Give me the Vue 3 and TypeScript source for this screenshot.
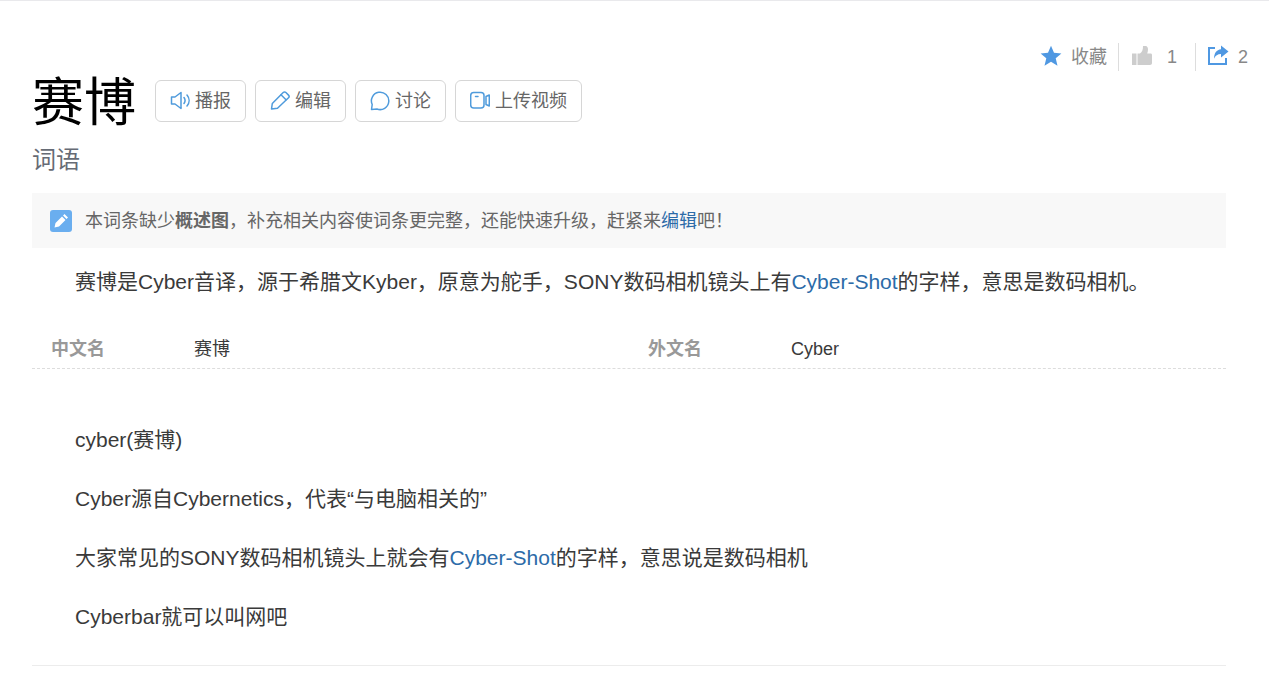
<script setup lang="ts">
interface InfoItem {
  name: string
  value: string
}

const info: InfoItem[] = [
  { name: '中文名', value: '赛博' },
  { name: '外文名', value: 'Cyber' },
]
</script>

<template>
  <div class="page" lang="zh-CN">
    <div class="tools">
      <button class="tool" type="button">
        <svg class="star" viewBox="0 0 22 22" aria-hidden="true">
          <path d="M11 0.8l3 7 7.4.6-5.7 4.9 1.8 7.5L11 16.8l-6.5 4 1.8-7.5L.6 8.4 8 7.8z" fill="#4f98e2" />
        </svg>
        <span>收藏</span>
      </button>
      <button class="tool like" type="button" aria-label="点赞">
        <svg class="thumb" viewBox="0 0 22 22" aria-hidden="true">
          <path d="M1 8.500h4.500V20H1zM6.500 8.500h2.500C11 7 12 5 12 1h2.500C16.500 1 17 3 17 4.500c0 1.500-.3 2.800-.8 4H19.500c1 0 1.500.6 1.500 1.500V18c0 1.300-.8 2-2 2H6.500z" fill="#cdcdcd" />
        </svg>
        <span>1</span>
      </button>
      <button class="tool share" type="button" aria-label="分享">
        <svg class="arrow" viewBox="0 0 22 22" aria-hidden="true">
          <path d="M8 3H2v16h17v-6" fill="none" stroke="#4f98e2" stroke-width="2" />
          <path d="M14 0.500l7.500 6L14 12.500V9c-3.500 0-5.500 1.500-7 4.700C7.200 8 9.500 4.700 14 4.200z" fill="#4f98e2" />
        </svg>
        <span>2</span>
      </button>
    </div>

    <main class="content">
      <header class="heading">
        <h1>赛博</h1>
        <div class="actions">
          <button class="action" type="button">
            <svg viewBox="0 0 20 20" aria-hidden="true">
              <path d="M1.500 6H5L11 1.500v16L5 13H1.500z" />
              <path d="M14 6.500c1.300 1.800 1.300 4.200 0 6M17 4c2.800 3.300 2.800 7.700 0 11" />
            </svg>
            <span>播报</span>
          </button>
          <button class="action" type="button">
            <svg viewBox="0 0 20 20" aria-hidden="true">
              <path d="M1.500 18l.8-5.500L13.200 1.500c.8-.8 1.900-.8 2.700 0L18.500 4.100c.8.800.8 1.900 0 2.700L7.500 17.200z" />
              <path d="M11 3.800l5 5" />
            </svg>
            <span>编辑</span>
          </button>
          <button class="action" type="button">
            <svg viewBox="0 0 20 20" aria-hidden="true">
              <path d="M1.500 18.500l.7-5A8.700 8.700 0 1 1 7 18z" />
            </svg>
            <span>讨论</span>
          </button>
          <button class="action" type="button">
            <svg viewBox="0 0 20 20" aria-hidden="true">
              <rect x="0.700" y="1.500" width="13.300" height="15.500" rx="3" />
              <path d="M5.500 5.500h2.500M16 5.500l3.300-1.500v11L16 13.500z" />
            </svg>
            <span>上传视频</span>
          </button>
        </div>
      </header>
      <p class="subtitle">词语</p>

      <div class="notice">
        <svg viewBox="0 0 22 22" aria-hidden="true">
          <rect width="22" height="22" rx="3" fill="#6aaeef" />
          <path d="M4.500 17.500l1-4.500 6.500-6.500 3.500 3.500L9 16.500zM13 5.500L14.500 4 18 7.500 16.500 9z" fill="#fff" />
        </svg>
        <p>本词条缺少<b>概述图</b>，补充相关内容使词条更完整，还能快速升级，赶紧来<a href="#edit">编辑</a>吧！</p>
      </div>

      <p class="para">赛博是Cyber音译，源于希腊文Kyber，原意为舵手，SONY数码相机镜头上有<a href="#cyber-shot">Cyber-Shot</a>的字样，意思是数码相机。</p>

      <dl class="info">
        <div v-for="item in info" :key="item.name" class="info-item">
          <dt>{{ item.name }}</dt>
          <dd>{{ item.value }}</dd>
        </div>
      </dl>

      <section class="body">
        <p class="para">cyber(赛博)</p>
        <p class="para">Cyber源自Cybernetics，代表“与电脑相关的”</p>
        <p class="para">大家常见的SONY数码相机镜头上就会有<a href="#cyber-shot">Cyber-Shot</a>的字样，意思说是数码相机</p>
        <p class="para">Cyberbar就可以叫网吧</p>
      </section>
    </main>
  </div>
</template>

<style>
body {
  margin: 0;
  background: #fff;
}
</style>

<style scoped>
.page {
  border-top: 1px solid #e9e9ec;
  font-family: "Liberation Sans", "Noto Sans CJK SC", sans-serif;
  font-size: 18px;
  line-height: 28px;
  color: #3a3a3a;
}

h1,
p,
dl,
dd {
  margin: 0;
}

a {
  color: #2c6ba8;
  text-decoration: none;
}

button {
  font: inherit;
  cursor: pointer;
}

.tools {
  display: flex;
  justify-content: flex-end;
  padding: 42px 21px 0 0;
}

.tool {
  display: flex;
  align-items: center;
  height: 28px;
  padding: 0;
  border: 0;
  background: none;
  color: #888;
}

.tool svg {
  width: 22px;
  height: 22px;
  padding-bottom: 2px;
}

.star {
  margin-right: 9px;
}

.like {
  margin-left: 11px;
  padding: 0 18px 0 12px;
  border-left: 1px solid #ddd;
}

.thumb {
  margin-right: 14px;
}

.share {
  padding-left: 11px;
  border-left: 1px solid #ddd;
}

.arrow {
  margin-right: 9px;
}

.content {
  margin: 0 43px 0 32px;
  border-bottom: 1px solid #ececec;
}

.heading {
  display: flex;
  align-items: center;
  gap: 19px;
}

h1 {
  padding-top: 4px;
  font-size: 52px;
  font-weight: 400;
  line-height: 56px;
  color: #000;
}

.actions {
  display: flex;
  gap: 9px;
}

.action {
  display: flex;
  align-items: center;
  gap: 5px;
  height: 42px;
  padding: 0 14px;
  border: 1px solid #d6d6d6;
  border-radius: 6px;
  background: #fff;
  color: #666;
}

.action svg {
  width: 20px;
  height: 20px;
  fill: none;
  stroke: #4f9bdc;
  stroke-width: 1.5;
  stroke-linejoin: round;
  stroke-linecap: round;
}

.subtitle {
  margin-top: 11px;
  font-size: 24px;
  line-height: 36px;
  color: #666b75;
}

.notice {
  display: flex;
  align-items: center;
  gap: 13px;
  margin-top: 15px;
  padding: 14px 18px 13px;
  background: #f8f8f8;
  color: #666;
}

.notice svg {
  width: 22px;
  height: 22px;
}

.para {
  padding-left: 43px;
  font-size: 21px;
  line-height: 35px;
}

.notice + .para {
  margin-top: 16px;
}

.info {
  display: flex;
  margin-top: 36px;
  padding-bottom: 5px;
  border-bottom: 1px dashed #ddd;
}

.info-item {
  display: flex;
  flex: 1;
  padding-left: 19px;
}

dt {
  width: 143px;
  font-weight: 700;
  color: #999;
}

.body {
  display: flex;
  flex-direction: column;
  gap: 24px;
  padding: 53px 0 31px;
}
</style>
